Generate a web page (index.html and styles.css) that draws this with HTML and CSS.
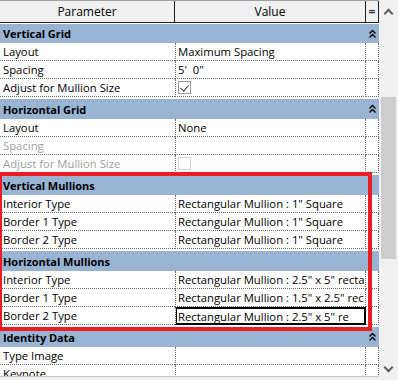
FILE: index.html
```html
<!DOCTYPE html>
<html lang="en">
<head>
    <meta charset="UTF-8">
    <title>Properties</title>
    <link rel="stylesheet" href="styles.css">
</head>
<body>
    <div class="panel">
        <div class="table">
            <div class="head">
                <div class="hcell">Parameter</div>
                <div class="hcell">Value</div>
                <div class="hcell eq">=</div>
            </div>

            <div class="group first">
                <span>Vertical Grid</span>
                <svg class="collapse" width="13" height="10" viewBox="0 0 13 10"><path d="M3.5 4.5 L6.5 1.5 L9.5 4.5 M3.5 8.5 L6.5 5.5 L9.5 8.5" fill="none" stroke="#000" stroke-width="1.4"/></svg>
            </div>
            <div class="row"><div class="cell">Layout</div><div class="cell">Maximum Spacing</div><div class="cell"></div></div>
            <div class="row"><div class="cell">Spacing</div><div class="cell">5'&nbsp; 0"</div><div class="cell"></div></div>
            <div class="row"><div class="cell">Adjust for Mullion Size</div><div class="cell"><span class="check on"></span></div><div class="cell"></div></div>

            <div class="group">
                <span>Horizontal Grid</span>
                <svg class="collapse" width="13" height="10" viewBox="0 0 13 10"><path d="M3.5 4.5 L6.5 1.5 L9.5 4.5 M3.5 8.5 L6.5 5.5 L9.5 8.5" fill="none" stroke="#000" stroke-width="1.4"/></svg>
            </div>
            <div class="row"><div class="cell">Layout</div><div class="cell">None</div><div class="cell"></div></div>
            <div class="row off"><div class="cell">Spacing</div><div class="cell"></div><div class="cell"></div></div>
            <div class="row off"><div class="cell">Adjust for Mullion Size</div><div class="cell"><span class="check"></span></div><div class="cell"></div></div>

            <div class="marked">
                <div class="group">
                    <span>Vertical Mullions</span>
                </div>
                <div class="row"><div class="cell">Interior Type</div><div class="cell">Rectangular Mullion : 1" Square</div><div class="cell"></div></div>
                <div class="row"><div class="cell">Border 1 Type</div><div class="cell">Rectangular Mullion : 1" Square</div><div class="cell"></div></div>
                <div class="row"><div class="cell">Border 2 Type</div><div class="cell">Rectangular Mullion : 1" Square</div><div class="cell"></div></div>

                <div class="group">
                    <span>Horizontal Mullions</span>
                </div>
                <div class="row"><div class="cell">Interior Type</div><div class="cell">Rectangular Mullion : 2.5" x 5" recta</div><div class="cell"></div></div>
                <div class="row"><div class="cell">Border 1 Type</div><div class="cell">Rectangular Mullion : 1.5" x 2.5" rec</div><div class="cell"></div></div>
                <div class="row"><div class="cell">Border 2 Type</div><div class="cell editing">Rectangular Mullion : 2.5" x 5" re</div><div class="cell"></div></div>
            </div>

            <div class="group">
                <span>Identity Data</span>
                <svg class="collapse" width="13" height="10" viewBox="0 0 13 10"><path d="M3.5 4.5 L6.5 1.5 L9.5 4.5 M3.5 8.5 L6.5 5.5 L9.5 8.5" fill="none" stroke="#000" stroke-width="1.4"/></svg>
            </div>
            <div class="row"><div class="cell">Type Image</div><div class="cell"></div><div class="cell"></div></div>
            <div class="row"><div class="cell">Keynote</div><div class="cell"></div><div class="cell"></div></div>
        </div>

        <div class="scrollbar">
            <div class="arrow up"></div>
            <div class="track"><div class="thumb"></div></div>
            <div class="arrow down"></div>
        </div>
    </div>
</body>
</html>
```

FILE: styles.css
```css
body {
    margin: 0;
    background-color: #ffffff;
    font-family: "Open Sans", "Noto Sans", Arial, sans-serif;
    font-size: 11.3px;
    color: #000;
}
.panel {
    display: flex;
    width: 398px;
    height: 380px;
    overflow: hidden;
    background-color: #f0f0f0;
}
.table {
    width: 379px;
    height: 376px;
    overflow: hidden;
    background-color: #fff;
    border-bottom: 1px solid #c8c8c8;
    flex: none;
}
.head, .row {
    display: grid;
    grid-template-columns: 175px 191px 13px;
}
.head {
    height: 23px;
    background-color: #f0f0f0;
    border-top: 1px solid #a0a0a0;
    border-bottom: 1px solid #1e1e1e;
    box-sizing: border-box;
}
.hcell {
    display: flex;
    align-items: center;
    justify-content: center;
    border-right: 1px solid #1e1e1e;
    font-size: 12px;
}
.hcell.eq {
    font-weight: bold;
    color: #1c2a4a;
}
.group {
    display: flex;
    align-items: center;
    justify-content: space-between;
    height: 20px;
    margin-top: 2px;
    padding-left: 3px;
    background-color: #98b4d2;
    font-weight: bold;
    font-size: 11px;
    letter-spacing: -0.05px;
}
.group.first {
    margin-top: 1px;
    height: 19px;
}
.collapse {
    display: block;
    flex: none;
}
.row {
    height: 18px;
}
.cell {
    display: flex;
    align-items: center;
    padding-left: 3px;
    white-space: nowrap;
    overflow: hidden;
    border-right: 1px dotted #6e6e6e;
    border-bottom: 1px dotted #6e6e6e;
    box-sizing: border-box;
}
.row .cell:first-child {
    border-right: none;
}
.row .cell:nth-child(2) {
    padding-left: 2px;
    border-left: 1px dotted #6e6e6e;
}
.row.off .cell {
    color: #a0a0a0;
}
.cell.editing {
    border: 1px solid #000;
    outline: 1px solid #000;
    outline-offset: -2px;
}
.check {
    display: inline-block;
    width: 13px;
    height: 13px;
    box-sizing: border-box;
    border: 1px solid #9a9a9a;
    background-color: #fff;
    position: relative;
}
.row.off .check {
    border-color: #d0d0d0;
}
.check.on::after {
    content: "";
    position: absolute;
    left: 3px;
    top: 1px;
    width: 4px;
    height: 7px;
    border-right: 1.5px solid #404040;
    border-bottom: 1.5px solid #404040;
    transform: rotate(40deg);
}
.marked {
    position: relative;
}
.marked::after {
    content: "";
    position: absolute;
    left: 0;
    top: -3px;
    width: 372px;
    height: 159px;
    box-sizing: border-box;
    border: 4px solid #ed1c24;
    border-left-width: 2px;
    pointer-events: none;
}
.scrollbar {
    width: 19px;
    display: flex;
    flex-direction: column;
    background-color: #f0f0f0;
}
.arrow {
    height: 22px;
    display: flex;
    align-items: center;
    justify-content: center;
}
.arrow::before {
    content: "";
    width: 5px;
    height: 5px;
    border-left: 2px solid #606060;
    border-top: 2px solid #606060;
}
.arrow.up::before {
    transform: translateY(2px) rotate(45deg);
}
.arrow.down::before {
    transform: translateY(-2px) rotate(225deg);
}
.track {
    flex: 1;
    padding: 75px 2px 0 2px;
}
.thumb {
    height: 162px;
    background-color: #cdcdcd;
}
```
